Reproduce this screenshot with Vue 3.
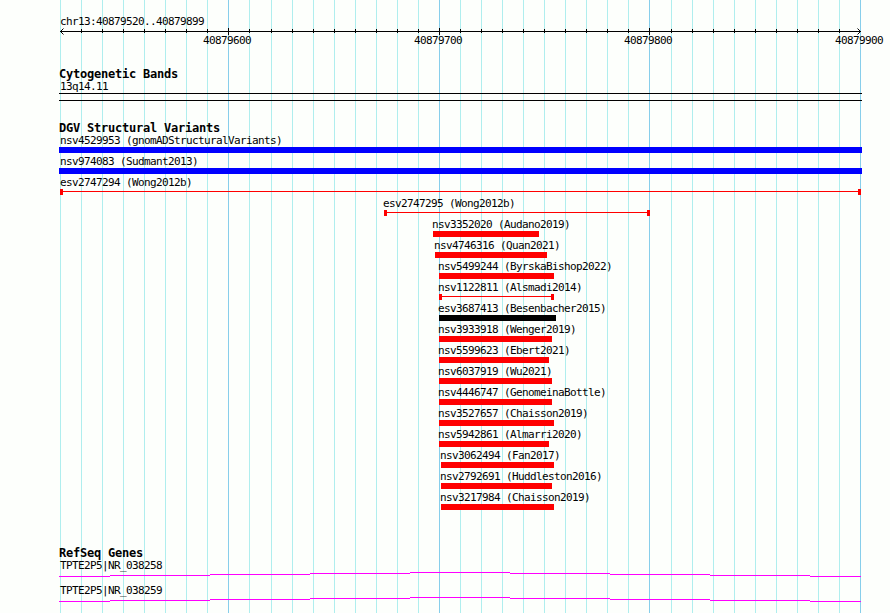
<template>
  <div class="browser">
    <svg class="gridlines" width="890" height="613" shape-rendering="crispEdges">
      <rect
        v-for="line in gridlines"
        :key="line.x"
        :x="line.x"
        y="0"
        width="1"
        height="613"
        :class="line.major ? 'major' : 'minor'"
      />
    </svg>

    <div class="panel">
      <header class="ruler">
        <div class="label">chr13:40879520..40879899</div>
        <svg class="axis" width="803" height="20">
          <g shape-rendering="crispEdges">
            <rect x="1" y="3" width="801" height="1" />
            <rect
              v-for="line in gridlines"
              :key="line.x"
              :x="line.x - LEFT"
              :y="line.major ? 0 : 1"
              width="1"
              :height="line.major ? 7 : 4"
              v-show="line.x > LEFT + 1 && line.x < 860"
            />
          </g>
          <path d="M4.5 0.5 L1.5 3.5 L4.5 6.5 M798.5 0.5 L801.5 3.5 L798.5 6.5" fill="none" stroke="#000" />
          <text
            v-for="tick in ticks"
            :key="tick.text"
            :x="tick.x - LEFT - 25"
            y="16"
          >{{ tick.text }}</text>
        </svg>
      </header>

      <section class="track cytobands">
        <h2>Cytogenetic Bands</h2>
        <div class="label">13q14.11</div>
        <div class="band"></div>
      </section>

      <section class="track variants">
        <h2>DGV Structural Variants</h2>
        <div
          v-for="v in variants"
          :key="v.name"
          class="variant"
          :style="{ marginLeft: v.start - LEFT + 'px' }"
        >
          <div class="label" :class="{ edge: v.start <= LEFT + 1, inset: v.start === LEFT }">{{ v.name }} ({{ v.study }})</div>
          <div
            class="glyph"
            :class="v.type"
            :style="{ width: v.end - v.start + 'px' }"
          ></div>
        </div>
      </section>

      <section class="track genes">
        <h2>RefSeq Genes</h2>
        <div v-for="gene in genes" :key="gene" class="gene">
          <div class="label">{{ gene }}</div>
          <svg width="803" height="5" shape-rendering="crispEdges">
            <rect
              v-for="s in intron"
              :key="s.x"
              :x="s.x"
              :y="s.y"
              :width="s.width"
              height="1"
              fill="#ff00ff"
            />
          </svg>
        </div>
      </section>
    </div>
  </div>
</template>

<script setup>
const LEFT = 59;

// one line every 10 bp, major line every 100 bp
const gridlines = Array.from({ length: 39 }, (_, i) => ({
  x: 60 + i * 21 + (i >= 10 ? 1 : 0) + (i >= 29 ? 1 : 0),
  major: i % 10 === 8
}));

const ticks = gridlines
  .filter((line) => line.major)
  .map((line, i) => ({ x: line.x, text: String(40879600 + i * 100) }));

const variants = [
  { name: 'nsv4529953', study: 'gnomADStructuralVariants', start: 59, end: 862, type: 'gain' },
  { name: 'nsv974083', study: 'Sudmant2013', start: 59, end: 862, type: 'gain' },
  { name: 'esv2747294', study: 'Wong2012b', start: 60, end: 861, type: 'range' },
  { name: 'esv2747295', study: 'Wong2012b', start: 384, end: 650, type: 'range' },
  { name: 'nsv3352020', study: 'Audano2019', start: 433, end: 539, type: 'loss' },
  { name: 'nsv4746316', study: 'Quan2021', start: 435, end: 547, type: 'loss' },
  { name: 'nsv5499244', study: 'ByrskaBishop2022', start: 439, end: 554, type: 'loss' },
  { name: 'nsv1122811', study: 'Alsmadi2014', start: 439, end: 554, type: 'range' },
  { name: 'esv3687413', study: 'Besenbacher2015', start: 439, end: 556, type: 'other' },
  { name: 'nsv3933918', study: 'Wenger2019', start: 439, end: 552, type: 'loss' },
  { name: 'nsv5599623', study: 'Ebert2021', start: 439, end: 549, type: 'loss' },
  { name: 'nsv6037919', study: 'Wu2021', start: 439, end: 552, type: 'loss' },
  { name: 'nsv4446747', study: 'GenomeinaBottle', start: 439, end: 552, type: 'loss' },
  { name: 'nsv3527657', study: 'Chaisson2019', start: 439, end: 554, type: 'loss' },
  { name: 'nsv5942861', study: 'Almarri2020', start: 439, end: 549, type: 'loss' },
  { name: 'nsv3062494', study: 'Fan2017', start: 441, end: 554, type: 'loss' },
  { name: 'nsv2792691', study: 'Huddleston2016', start: 441, end: 552, type: 'loss' },
  { name: 'nsv3217984', study: 'Chaisson2019', start: 441, end: 554, type: 'loss' }
];

const genes = ['TPTE2P5|NR_038258', 'TPTE2P5|NR_038259'];

// the intron peaks in the middle, dropping 1px per step on both sides
const stops = [0, 51, 151, 251, 351, 451, 551, 651, 751, 802];
const intron = stops.slice(0, -1).map((x, i) => ({
  x,
  y: Math.abs(4 - i),
  width: stops[i + 1] - x
}));
</script>

<style>
body {
  margin: 0;
  background: #fdfffc;
}
</style>

<style scoped>
.browser {
  position: relative;
  width: 890px;
  height: 613px;
  overflow: hidden;
  background: #fdfffc;
  color: #000;
  font-family: "DejaVu Sans Mono", "Liberation Mono", monospace;
  font-size: 11px;
  letter-spacing: -0.622px;
}

.gridlines {
  position: absolute;
  top: 0;
  left: 0;
}

.minor {
  fill: #afeeee;
}

.major {
  fill: #87ceeb;
}

.panel {
  position: relative;
  width: 803px;
  margin-left: 59px;
  padding-top: 15px;
}

.label {
  height: 13px;
  padding-left: 1px;
  line-height: 13px;
  white-space: nowrap;
}

.ruler {
  height: 52px;
}

.axis {
  display: block;
  overflow: visible;
}

h2 {
  height: 13px;
  margin: 0;
  font-size: 12px;
  font-weight: bold;
  line-height: 14px;
  letter-spacing: -0.224px;
  white-space: nowrap;
}

.cytobands {
  height: 54px;
}

.band {
  box-sizing: border-box;
  height: 8px;
  border-top: 1px solid #000;
  border-bottom: 1px solid #000;
}

.variants {
  height: 425px;
}

.variant {
  height: 21px;
}

.variant .label {
  padding-left: 0;
  text-indent: -1px;
}

/* labels never start left of the ruler */
.variant .label.edge {
  text-indent: 0;
}

.variant .label.inset {
  text-indent: 1px;
}

.glyph {
  box-sizing: border-box;
  height: 6px;
}

.gain {
  background: #0000ff;
}

.loss {
  background: #ff0000;
}

.other {
  background: #000;
}

.range {
  border: solid #ff0000;
  border-width: 0 3px;
  background: linear-gradient(#ff0000, #ff0000) 0 2px / 100% 1px no-repeat;
}

.gene {
  height: 25px;
}

.gene svg {
  display: block;
}
</style>
